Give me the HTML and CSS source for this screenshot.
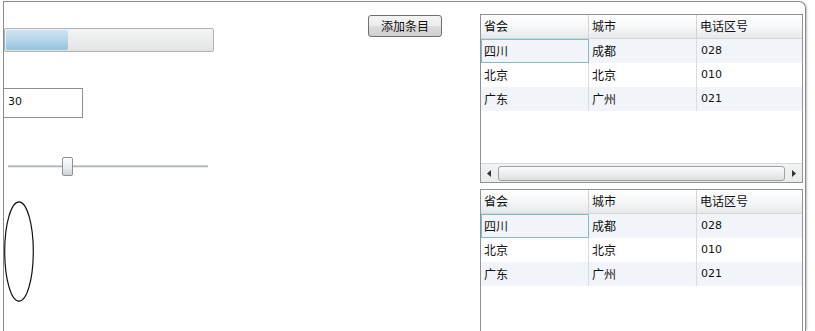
FILE: index.html
```html
<!DOCTYPE html>
<html>
<head>
<meta charset="utf-8">
<link rel="stylesheet" href="styles.css">
</head>
<body>
<div class="window">
  <div class="left">
    <div class="progress"><div class="progress-fill"></div></div>
    <div class="textbox">30</div>
    <div class="slider"><div class="track"></div><div class="thumb"></div></div>
    <svg class="ellipse" width="32" height="102" viewBox="0 0 32 102"><ellipse cx="15" cy="50.5" rx="14.3" ry="49.6" fill="none" stroke="#111" stroke-width="1.2"/></svg>
  </div>
  <div class="mid">
    <button class="btn">添加条目</button>
  </div>
  <div class="right">
    <div class="grid grid1">
      <div class="row head"><div class="c">省会</div><div class="c">城市</div><div class="c">电话区号</div></div>
      <div class="row alt"><div class="c sel">四川</div><div class="c">成都</div><div class="c num">028</div></div>
      <div class="row"><div class="c">北京</div><div class="c">北京</div><div class="c num">010</div></div>
      <div class="row alt"><div class="c">广东</div><div class="c">广州</div><div class="c num">021</div></div>
      <div class="spacer"></div>
      <div class="hscroll">
        <div class="arrow"><svg width="5" height="7" viewBox="0 0 5 7"><path d="M4 0 L0 3.5 L4 7 Z" fill="#333"/></svg></div>
        <div class="sthumb"></div>
        <div class="arrow"><svg width="5" height="7" viewBox="0 0 5 7"><path d="M1 0 L5 3.5 L1 7 Z" fill="#333"/></svg></div>
      </div>
    </div>
    <div class="grid grid2">
      <div class="row head"><div class="c">省会</div><div class="c">城市</div><div class="c">电话区号</div></div>
      <div class="row alt"><div class="c sel">四川</div><div class="c">成都</div><div class="c num">028</div></div>
      <div class="row"><div class="c">北京</div><div class="c">北京</div><div class="c num">010</div></div>
      <div class="row alt"><div class="c">广东</div><div class="c">广州</div><div class="c num">021</div></div>
    </div>
  </div>
</div>
</body>
</html>
```
FILE: styles.css
```css
html, body {
  margin: 0;
  padding: 0;
  background: #fff;
  overflow: hidden;
}
body {
  font-family: "Noto Sans CJK SC", "DejaVu Sans", sans-serif;
  font-size: 12px;
  color: #111;
}
.window {
  margin: 1px 0 0 3px;
  width: 801px;
  height: 329px;
  border: 1px solid #8a8a8a;
  border-bottom: none;
  border-top-right-radius: 7px;
  box-shadow: 2px 0 2px -1px rgba(0,0,0,0.25);
  display: flex;
  box-sizing: content-box;
  overflow: hidden;
}
.left {
  width: 364px;
  display: flex;
  flex-direction: column;
  align-items: flex-start;
}
.progress {
  margin-top: 26px;
  width: 206px;
  height: 20px;
  border: 1px solid #aeb2b5;
  border-radius: 2px;
  background: linear-gradient(#f4f4f4, #ececec 50%, #e2e4e4);
  padding: 1px;
  box-sizing: content-box;
}
.progress-fill {
  width: 62px;
  height: 20px;
  border-radius: 2px;
  background: linear-gradient(#cfe4f2, #b5d6ea 50%, #94c2de);
}
.textbox {
  margin-top: 36px;
  margin-left: -1px;
  border: 1px solid #8f8f8f;
  font-family: "DejaVu Sans", sans-serif;
  font-size: 11px;
  line-height: 26px;
  padding-left: 4px;
  box-sizing: border-box;
  width: 80px;
  height: 30px;
}
.slider {
  margin-top: 39px;
  margin-left: 4px;
  width: 200px;
  height: 19px;
  position: relative;
}
.track {
  position: absolute;
  left: 0;
  right: 0;
  top: 8px;
  height: 1px;
  background: #b0b8bc;
  border-top: 1px solid #c8d0d4;
  border-bottom: 1px solid #e8ecee;
}
.thumb {
  position: absolute;
  left: 54px;
  top: 0;
  width: 9px;
  height: 17px;
  border: 1px solid #8b9097;
  border-radius: 2px;
  background: linear-gradient(#fdfdfd, #e8eaec 60%, #cfd3d6);
}
.ellipse {
  margin-top: 25px;
  margin-left: 0;
  display: block;
}
.mid {
  width: 74px;
  padding-top: 13px;
}
.btn {
  width: 74px;
  height: 22px;
  border: 1px solid #707070;
  border-radius: 3px;
  background: linear-gradient(#f4f4f4, #ebebeb 50%, #dddddd 51%, #cfcfcf);
  font-family: "Noto Sans CJK SC", sans-serif;
  font-size: 12px;
  color: #111;
  padding: 0;
  line-height: 18px;
}
.right {
  margin-left: 38px;
  padding-top: 12px;
  width: 323px;
  display: flex;
  flex-direction: column;
  gap: 6px;
}
.grid {
  border: 1px solid #8e9399;
  width: 323px;
  box-sizing: border-box;
  display: flex;
  flex-direction: column;
  background: #fff;
  flex-shrink: 0;
}
.grid1 { height: 169px; }
.grid2 { flex: 1; border-bottom: none; }
.row {
  display: grid;
  grid-template-columns: 108px 108px 1fr;
  height: 24px;
  flex-shrink: 0;
}
.row.head {
  height: 23px;
  background: linear-gradient(#ffffff, #f6f7f8 50%, #e6e9ec);
  border-bottom: 1px solid #d5d5d5;
}
.row.alt { background: #f1f4f8; }
.c {
  padding-left: 3px;
  line-height: 23px;
  border-right: 1px solid #d8dde0;
  white-space: nowrap;
  box-sizing: border-box;
}
.c:last-child { border-right: none; }
.head .c {
  border-right: 1px solid #d0d4d7;
  line-height: 22px;
}
.head .c:last-child { border-right: none; }
.c.num {
  font-family: "DejaVu Sans", sans-serif;
  font-size: 11px;
  padding-left: 4px;
}
.c.sel {
  border: 1px solid #7fbcc6;
  line-height: 21px;
  padding-left: 2px;
}
.spacer { flex: 1; }
.hscroll {
  height: 18px;
  display: flex;
  align-items: center;
  background: linear-gradient(#f2f3f4, #e8eaeb);
  border-top: 1px solid #d6d8da;
  flex-shrink: 0;
}
.arrow {
  width: 17px;
  height: 17px;
  display: flex;
  align-items: center;
  justify-content: center;
}
.sthumb {
  flex: 1;
  height: 13px;
  border: 1px solid #9aa0a6;
  border-radius: 3px;
  background: linear-gradient(#fbfbfb, #eceeef 50%, #dcdfe1);
}
```
